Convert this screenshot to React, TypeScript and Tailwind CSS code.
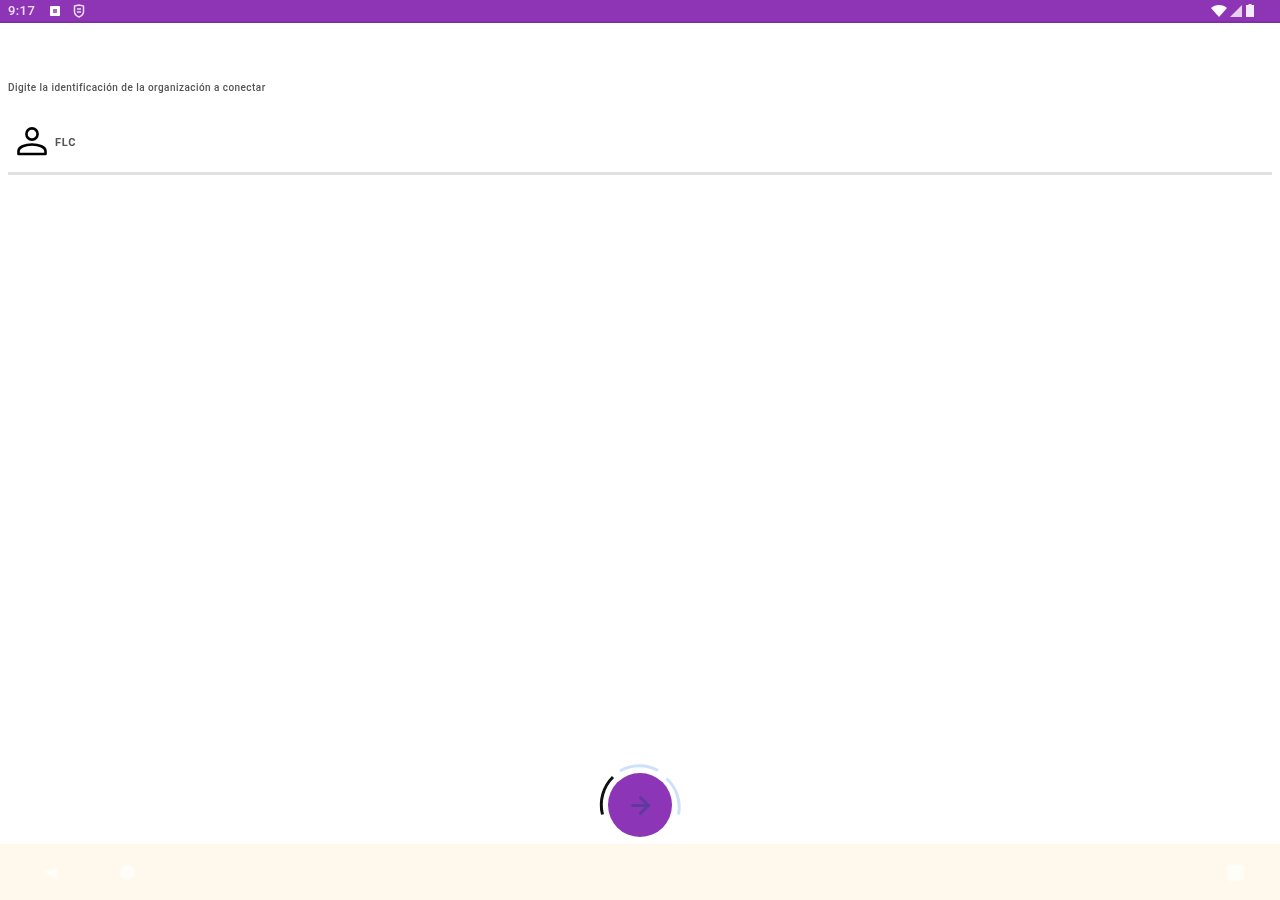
import { ArrowRight } from 'lucide-react';

function StatusBar() {
  return (
    <header className="flex h-[23px] shrink-0 items-center justify-between border-b-2 border-[#7f2fa8] bg-[#8e35b5] pl-[8px] pr-[26px] text-white">
      <div className="flex items-center blur-[0.6px]">
        <span className="w-[41px] text-[13px] font-medium leading-none tracking-[0.4px] text-[#ecdcf4]">9:17</span>
        <svg width="12" height="12" viewBox="0 0 12 12" className="mr-[12px]">
          <rect x="1" y="1" width="10" height="10" rx="1" fill="#fff" />
          <rect x="4" y="4" width="4" height="4" fill="#a868c8" />
        </svg>
        <svg width="12" height="14" viewBox="0 0 12 14" fill="none" stroke="#ecdcf4" strokeWidth="1.5">
          <path d="M1.5 2 L6 1 L10.5 2 V7.5 C10.5 10 8.5 12 6 13 C3.5 12 1.5 10 1.5 7.5 Z" />
          <path d="M4 5 H8 M4 8 H8" />
        </svg>
      </div>
      <div className="flex items-center gap-[3px] blur-[0.6px]">
        <svg width="16" height="12" viewBox="0 0 16 12">
          <path d="M0 3 C4 -1 12 -1 16 3 L8 12 Z" fill="#fff" />
        </svg>
        <svg width="12" height="12" viewBox="0 0 12 12">
          <path d="M12 0 V12 H0 Z" fill="#e6d2ef" />
        </svg>
        <svg width="8" height="13" viewBox="0 0 8 13" className="ml-[1px]">
          <path d="M2.5 0 H5.5 V1 H8 V13 H0 V1 H2.5 Z" fill="#f4eaf8" />
        </svg>
      </div>
    </header>
  );
}

function PersonIcon() {
  return (
    <svg width="32" height="32" viewBox="0 0 32 32" fill="none" stroke="#000" strokeWidth="2.6" className="blur-[0.3px]">
      <circle cx="16" cy="8" r="5.6" />
      <path d="M2.5 28 V25 C2.5 21 9 18.5 16 18.5 C23 18.5 29.5 21 29.5 25 V28 Z" strokeLinejoin="round" />
    </svg>
  );
}

function Fab() {
  return (
    <div className="relative flex h-[64px] w-[64px] items-center justify-center rounded-full bg-[#8c35b6]">
      <ArrowRight size={27} strokeWidth={2.6} className="text-[#5e3a9f] blur-[0.4px]" />
      <svg
        width="90"
        height="90"
        viewBox="0 0 90 90"
        fill="none"
        strokeWidth="3"
        className="absolute left-[-13px] top-[-13px] blur-[0.5px]"
      >
        <path d="M25 11 A39 39 0 0 1 63 10.5" stroke="#cfe0fd" />
        <path d="M71.5 18.5 A39 39 0 0 1 83.5 54.5" stroke="#cfe0fd" />
        <path d="M18 17 A39 39 0 0 0 7.5 54.5" stroke="#111" />
      </svg>
    </div>
  );
}

export default function App() {
  return (
    <div
      className="flex h-[900px] w-[1280px] flex-col overflow-hidden bg-white"
      style={{ fontFamily: 'Roboto, "Liberation Sans", sans-serif' }}
    >
      <StatusBar />
      <main className="flex flex-1 flex-col px-[8px]">
        <p className="mt-[58px] text-[10px] font-medium leading-[14px] tracking-[0.45px] text-[#555] blur-[0.5px]">
          Digite la identificación de la organización a conectar
        </p>
        <div className="mt-[22px] flex h-[58px] items-center gap-[7px] border-b-[3px] border-[#e0e0e0] pb-[5px] pl-[8px]">
          <PersonIcon />
          <span className="text-[11px] font-bold leading-none tracking-[0.8px] text-[#555] blur-[0.5px]">FLC</span>
        </div>
        <div className="mt-auto mb-[7px] flex justify-center">
          <Fab />
        </div>
      </main>
      <footer className="flex h-[56px] shrink-0 items-center justify-between bg-[#fff8ec] pl-[40px] pr-[36px]">
        <div className="flex items-center gap-[60px] blur-[1.5px]">
          <svg width="20" height="16" viewBox="0 0 20 16" className="mt-[4px]">
            <path d="M2 5 L18 1 V15 Z" fill="#fffdf8" />
          </svg>
          <span className="h-[15px] w-[15px] rounded-full bg-[#fffdf8]" />
        </div>
        <span className="h-[17px] w-[17px] rounded-[2px] bg-[#fffdf8] blur-[1.5px]" />
      </footer>
    </div>
  );
}
